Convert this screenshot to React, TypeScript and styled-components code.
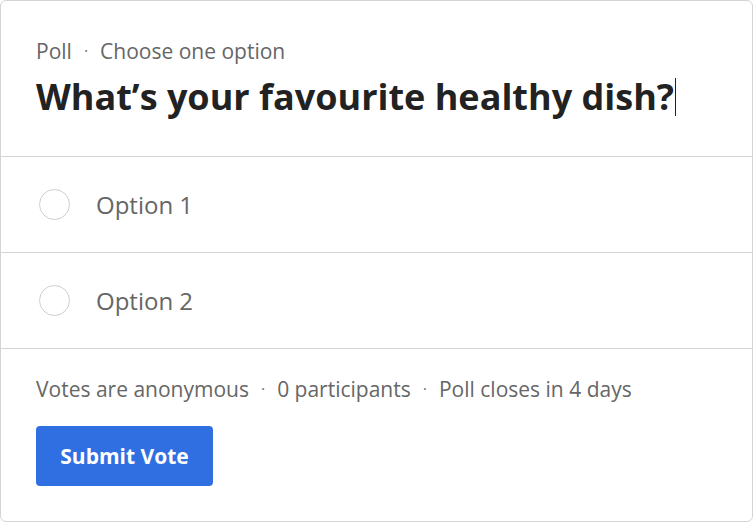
import React from "react";
import styled, { createGlobalStyle } from "styled-components";

const Global = createGlobalStyle`
  html, body { margin: 0; padding: 0; background: #fff; }
  body { font-family: "Open Sans", "Noto Sans", sans-serif; -webkit-font-smoothing: antialiased; }
  * { box-sizing: border-box; }
`;

const Card = styled.div`
  width: 753px;
  height: 522px;
  border: 1px solid #d4d4d4;
  border-radius: 6px;
  background: #fff;
  display: flex;
  flex-direction: column;
  overflow: hidden;
`;

const Header = styled.div`
  padding: 36px 35px 0 35px;
  height: 156px;
  border-bottom: 1px solid #d4d4d4;
`;

const Meta = styled.div`
  display: flex;
  align-items: center;
  font-size: 21px;
  line-height: 28px;
  color: #666;
`;

const Dot = styled.span`
  margin: 0 12px;
  font-size: 16px;
  color: #777;
`;

const Title = styled.h1`
  margin: 8px 0 0;
  font-size: 36px;
  line-height: 48px;
  font-weight: 700;
  color: #222;
  display: flex;
  align-items: center;
`;

const Caret = styled.span`
  display: inline-block;
  width: 1px;
  height: 38px;
  background: #222;
  margin-left: 1px;
`;

const Option = styled.label`
  height: 96px;
  display: flex;
  align-items: center;
  padding-left: 38px;
  border-bottom: 1px solid #d4d4d4;
  cursor: pointer;
`;

const Radio = styled.span`
  width: 31px;
  height: 31px;
  border-radius: 50%;
  border: 1.5px solid #cfcfcf;
  flex: none;
`;

const OptionText = styled.span`
  margin-left: 26px;
  font-size: 24px;
  color: #666;
`;

const Footer = styled.div`
  padding: 26px 35px 0;
  display: flex;
  flex-direction: column;
  align-items: flex-start;
`;

const Button = styled.button`
  margin-top: 23px;
  width: 177px;
  height: 60px;
  border: none;
  border-radius: 4px;
  background: #2f6fe2;
  color: #fff;
  font-family: "Open Sans", sans-serif;
  font-weight: 700;
  font-size: 21px;
  cursor: pointer;
`;

export default function App() {
  return (
    <>
      <Global />
      <Card>
        <Header>
          <Meta>
            Poll<Dot>·</Dot>Choose one option
          </Meta>
          <Title>
            What’s your favourite healthy dish?<Caret />
          </Title>
        </Header>
        {["Option 1", "Option 2"].map((o) => (
          <Option key={o}>
            <Radio />
            <OptionText>{o}</OptionText>
          </Option>
        ))}
        <Footer>
          <Meta>
            Votes are anonymous<Dot>·</Dot>0 participants<Dot>·</Dot>Poll closes in 4 days
          </Meta>
          <Button>Submit Vote</Button>
        </Footer>
      </Card>
    </>
  );
}
